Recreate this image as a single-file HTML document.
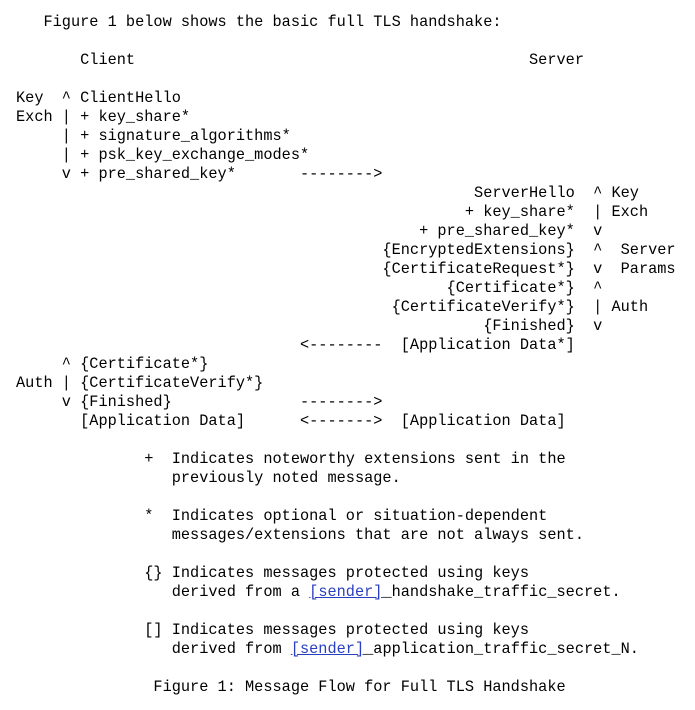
<!DOCTYPE html>
<html><head><meta charset="utf-8"><style>
html,body{margin:0;padding:0;background:#fff;width:695px;height:710px;overflow:hidden}
pre{margin:0;position:absolute;left:16px;top:13px;font-family:"Liberation Mono",monospace;font-size:15.27px;line-height:19px;color:#000}
a{color:#2a3fc0;text-decoration:underline}
</style></head><body><pre>   Figure 1 below shows the basic full TLS handshake:

       Client                                           Server

Key  ^ ClientHello
Exch | + key_share*
     | + signature_algorithms*
     | + psk_key_exchange_modes*
     v + pre_shared_key*       --------&gt;
                                                  ServerHello  ^ Key
                                                 + key_share*  | Exch
                                            + pre_shared_key*  v
                                        {EncryptedExtensions}  ^  Server
                                        {CertificateRequest*}  v  Params
                                               {Certificate*}  ^
                                         {CertificateVerify*}  | Auth
                                                   {Finished}  v
                               &lt;--------  [Application Data*]
     ^ {Certificate*}
Auth | {CertificateVerify*}
     v {Finished}              --------&gt;
       [Application Data]      &lt;-------&gt;  [Application Data]

              +  Indicates noteworthy extensions sent in the
                 previously noted message.

              *  Indicates optional or situation-dependent
                 messages/extensions that are not always sent.

              {} Indicates messages protected using keys
                 derived from a <a>[sender]</a>_handshake_traffic_secret.

              [] Indicates messages protected using keys
                 derived from <a>[sender]</a>_application_traffic_secret_N.

               Figure 1: Message Flow for Full TLS Handshake</pre></body></html>
